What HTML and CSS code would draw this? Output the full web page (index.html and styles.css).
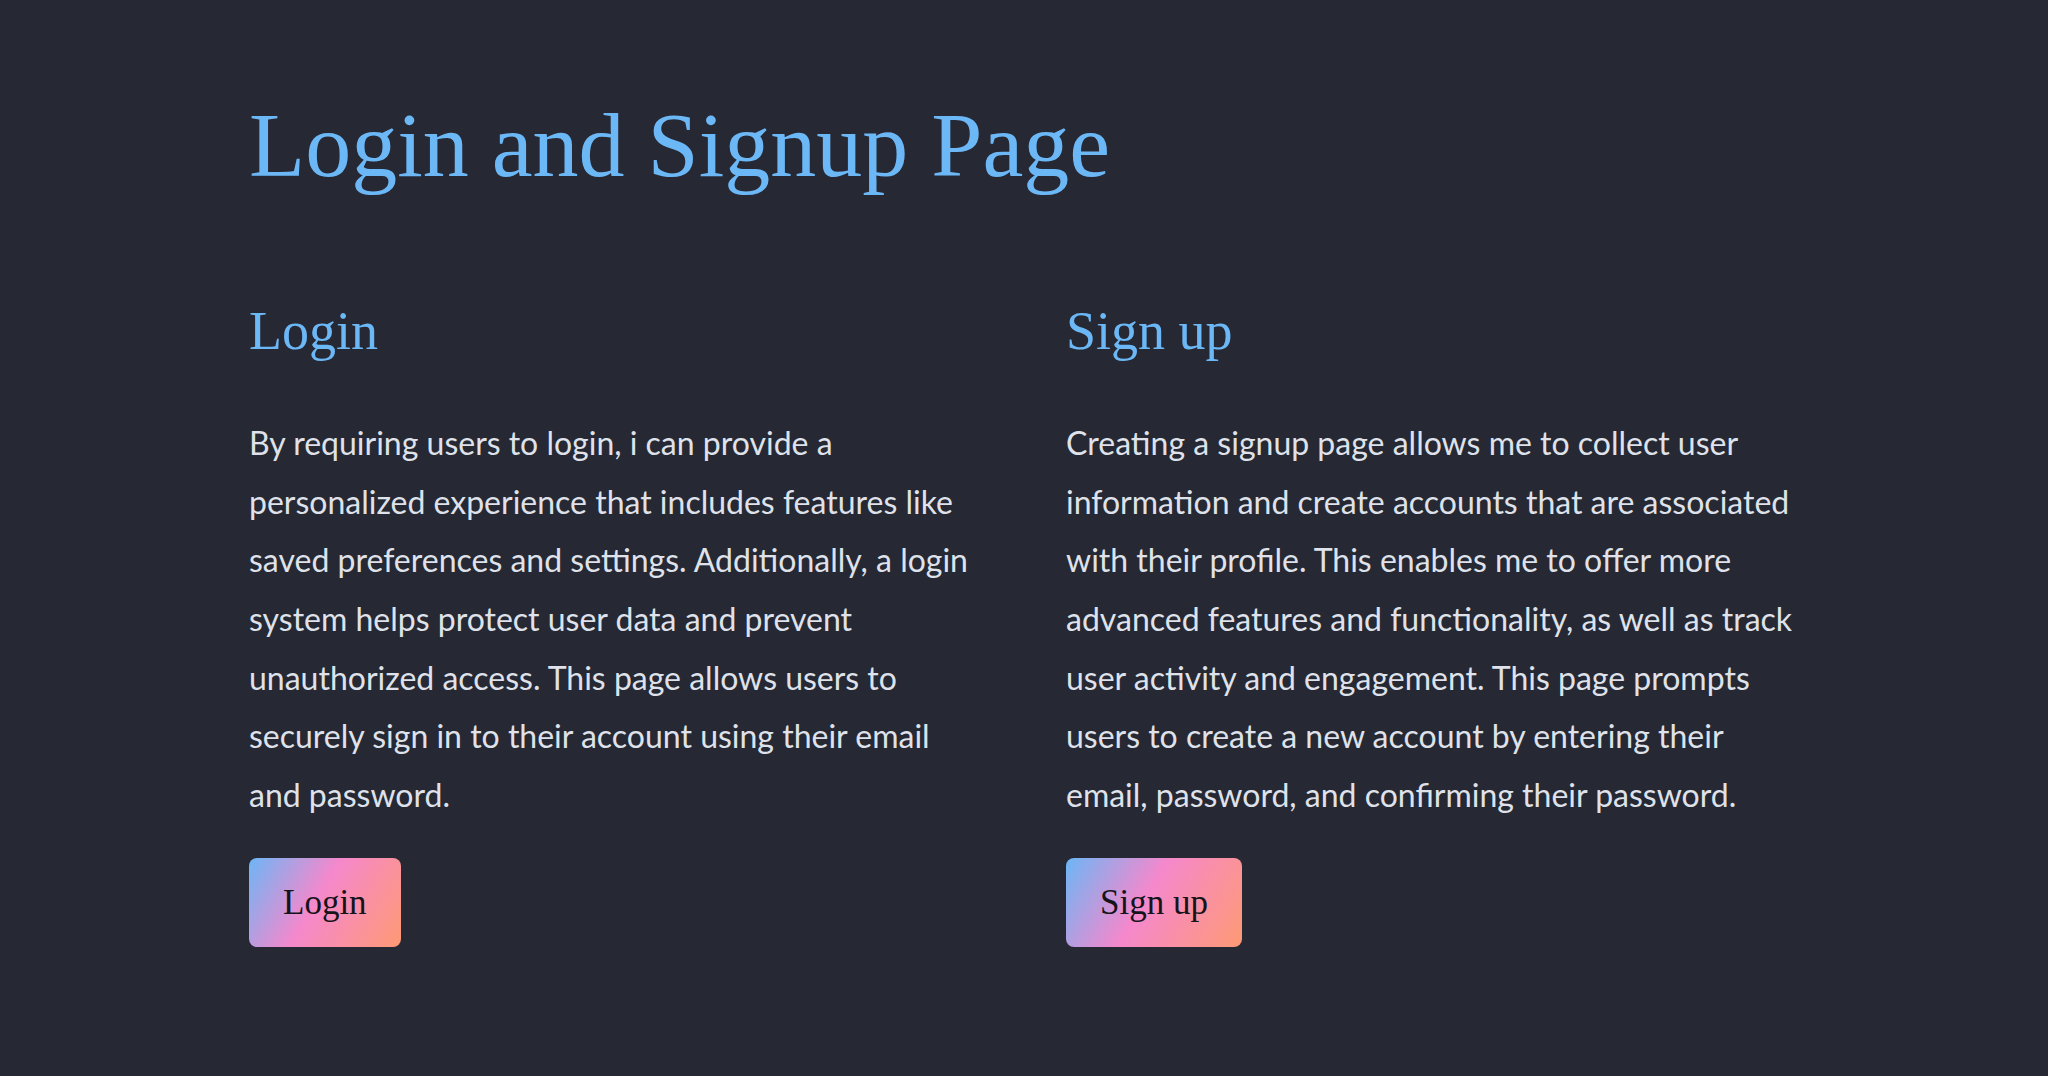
FILE: index.html
```html
<!DOCTYPE html>
<html lang="en">
<head>
    <meta charset="UTF-8">
    <meta name="viewport" content="width=device-width, initial-scale=1.0">
    <title>Login and Signup Page</title>
    <link rel="stylesheet" href="styles.css">
</head>
<body>

    <div class="page">
        <div class="container">
            <h1>Login and Signup Page</h1>

            <div class="columns">
                <div class="column">
                    <h2>Login</h2>
                    <p>By requiring users to login, i can provide a personalized experience that includes features like saved preferences and settings. Additionally, a login system helps protect user data and prevent unauthorized access. This page allows users to securely sign in to their account using their email and password.</p>
                    <button class="btn">Login</button>
                </div>
                <div class="column">
                    <h2>Sign up</h2>
                    <p>Creating a signup page allows me to collect user information and create accounts that are associated with their profile. This enables me to offer more advanced features and functionality, as well as track user activity and engagement. This page prompts users to create a new account by entering their email, password, and confirming their password.</p>
                    <button class="btn">Sign up</button>
                </div>
            </div>
        </div>
    </div>

</body>
</html>
```

FILE: styles.css
```css
body {
    margin: 0;
    padding: 0;
    background-color: #262833;
    font-family: Lato, "Open Sans", sans-serif;
    color: #dfe2ea;
}
.page {
    padding: 90px 0 127px;
}
.container {
    width: 1550px;
    margin: 0 auto;
}
h1, h2 {
    font-family: "Liberation Serif", "Times New Roman", serif;
    font-weight: normal;
    color: #6cb7f6; /* light blue for headings */
    line-height: 1.2;
    margin: 0;
}
h1 {
    font-size: 92px;
    margin-bottom: 99px;
}
h2 {
    font-size: 54px;
    margin-bottom: 50px;
}
.columns {
    display: grid;
    grid-template-columns: 733px 733px;
    column-gap: 84px;
}
.column p {
    font-size: 32px;
    line-height: 58.6px;
    margin: 0 0 34px;
}
.btn {
    display: block;
    height: 89px;
    padding: 0 34px;
    border: none;
    border-radius: 8px;
    background: linear-gradient(120deg, #6cb6f6 0%, #f588cc 45%, #fe9a74 100%);
    color: #14141a;
    font-family: "Liberation Serif", "Times New Roman", serif;
    font-size: 35px;
    cursor: pointer;
}
```
